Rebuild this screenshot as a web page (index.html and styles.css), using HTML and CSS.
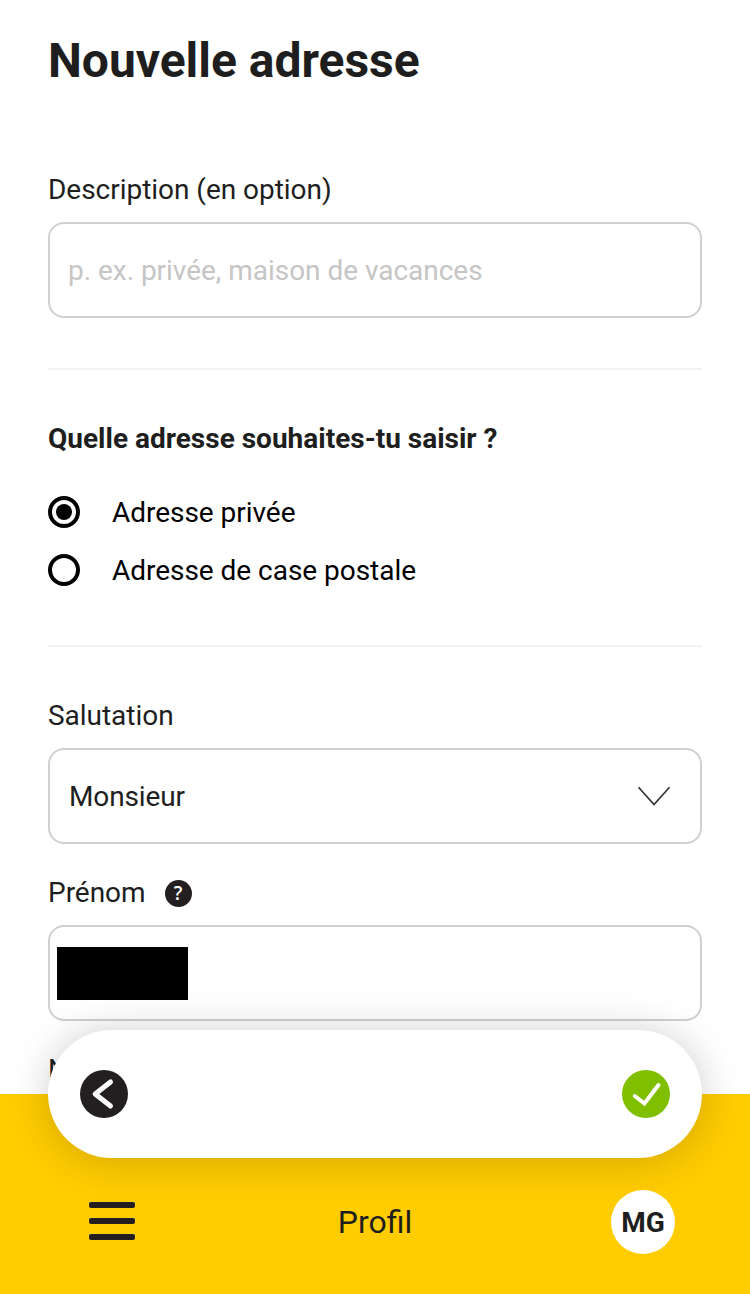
FILE: index.html
```html
<!DOCTYPE html>
<html lang="fr">
<head>
<meta charset="utf-8">
<title>Nouvelle adresse</title>
<link rel="stylesheet" href="styles.css">
</head>
<body>
<main class="form">
  <h1 class="title">Nouvelle adresse</h1>

  <div class="field">
    <div class="label"><span>Description (en option)</span></div>
    <div class="box"><span class="placeholder">p. ex. privée, maison de vacances</span></div>
  </div>

  <section class="choice">
    <h2 class="question">Quelle adresse souhaites-tu saisir ?</h2>
    <div class="option"><span class="radio radio-on"></span><span class="option-text">Adresse privée</span></div>
    <div class="option"><span class="radio"></span><span class="option-text">Adresse de case postale</span></div>
  </section>

  <div class="field">
    <div class="label"><span>Salutation</span></div>
    <div class="box box-select">
      <span>Monsieur</span>
      <svg class="chevron" width="34" height="20" viewBox="0 0 34 20"><path d="M1.500 1.300L17 18.600L32.500 1.300"/></svg>
    </div>
  </div>

  <div class="field">
    <div class="label"><span>Prénom</span><span class="help">?</span></div>
    <div class="box box-redacted"><span class="redacted"></span></div>
  </div>

  <div class="field">
    <div class="label"><span>Nom</span></div>
  </div>
</main>

<nav class="nav">
  <div class="menu"><span class="bar"></span><span class="bar"></span><span class="bar"></span></div>
  <span class="nav-title">Profil</span>
  <div class="avatar">MG</div>
</nav>

<div class="actions">
  <svg class="action" viewBox="0 0 48 48"><circle class="back" cx="24" cy="24" r="24"/><path class="back-arrow" d="M30.500 12L15.200 24l15.300 12"/></svg>
  <svg class="action" viewBox="0 0 48 48"><circle class="ok" cx="24" cy="24" r="24"/><path class="check" d="M12.800 26L22.400 33.500L36.500 15"/></svg>
</div>
</body>
</html>
```

FILE: styles.css
```css
* { box-sizing: border-box; }

body {
  margin: 0;
  height: 1294px;
  overflow: hidden;
  position: relative;
  background: #fff;
  color: #1e1e1e;
  font: 28px/36px Roboto, "Liberation Sans", sans-serif;
  letter-spacing: -0.03px;
}

.form {
  height: 1094px;
  padding: 33px 48px 0;
  overflow: hidden;
}

.title {
  margin: 0 0 83px;
  font-size: 48px;
  line-height: 56px;
  font-weight: 700;
}

.field { margin-bottom: 31px; }

.label {
  display: flex;
  align-items: center;
  height: 36px;
  margin-bottom: 14px;
}

.box {
  display: flex;
  align-items: center;
  justify-content: space-between;
  height: 96px;
  padding: 2px 30px 0 18px;
  border: 2px solid #d0d0d0;
  border-radius: 16px;
}

.box-select {
  padding: 2px 29px 0 19px;
  letter-spacing: -0.12px;
}

.placeholder { color: #c5c5c5; }

.chevron {
  margin-top: -2px;
  fill: none;
  stroke: #333;
  stroke-width: 1.7;
}

.choice {
  height: 279px;
  margin: 50px 0 51px;
  padding-top: 51px;
  border-top: 2px solid #f2f2f2;
  border-bottom: 2px solid #f2f2f2;
}

.question {
  margin: 0 0 37px;
  font-size: 28px;
  line-height: 36px;
  font-weight: 700;
  letter-spacing: normal;
}

.option {
  display: flex;
  align-items: center;
  gap: 32px;
  height: 36px;
  margin-bottom: 22px;
  color: #000;
}

.option-text { padding-top: 2px; }

.radio {
  display: flex;
  align-items: center;
  justify-content: center;
  width: 32px;
  height: 32px;
  border: 4px solid #000;
  border-radius: 50%;
}

.radio-on::after {
  content: "";
  width: 16px;
  height: 16px;
  border-radius: 50%;
  background: #000;
}

.help {
  width: 27px;
  height: 27px;
  margin-left: 19px;
  border-radius: 50%;
  background: #231f20;
  color: #fff;
  font-family: "Open Sans", Roboto, sans-serif;
  font-size: 19px;
  line-height: 27px;
  font-weight: 600;
  text-align: center;
}

.box-redacted { padding: 0 0 0 7px; }

.redacted {
  width: 131px;
  height: 53px;
  background: #000;
}

.nav {
  display: grid;
  grid-template-columns: 1fr auto 1fr;
  align-items: center;
  height: 200px;
  padding: 56px 75px 0;
  background: #fc0;
  letter-spacing: normal;
}

.menu {
  display: grid;
  gap: 10px;
  margin: -2px 0 0 14px;
}

.bar {
  width: 46px;
  height: 6px;
  border-radius: 2px;
  background: #231f20;
}

.nav-title { font-size: 32px; }

.avatar {
  justify-self: end;
  width: 64px;
  height: 64px;
  padding-top: 1px;
  border-radius: 50%;
  background: #fff;
  font-weight: 700;
  line-height: 64px;
  text-align: center;
}

/* Floating action bar over the form and the navigation */
.actions {
  position: absolute;
  top: 1030px;
  left: 48px;
  right: 48px;
  display: flex;
  align-items: center;
  justify-content: space-between;
  height: 128px;
  padding: 0 32px;
  border-radius: 64px;
  background: #fff;
  box-shadow: 0 2px 40px rgba(0, 0, 0, .2);
}

.action { width: 48px; height: 48px; }
.back { fill: #231f20; }
.ok { fill: #80be00; }

.back-arrow, .check {
  fill: none;
  stroke: #fff;
  stroke-width: 5;
  stroke-linecap: round;
  stroke-linejoin: round;
}

.check {
  stroke-width: 4;
  stroke-linejoin: miter;
}
```
